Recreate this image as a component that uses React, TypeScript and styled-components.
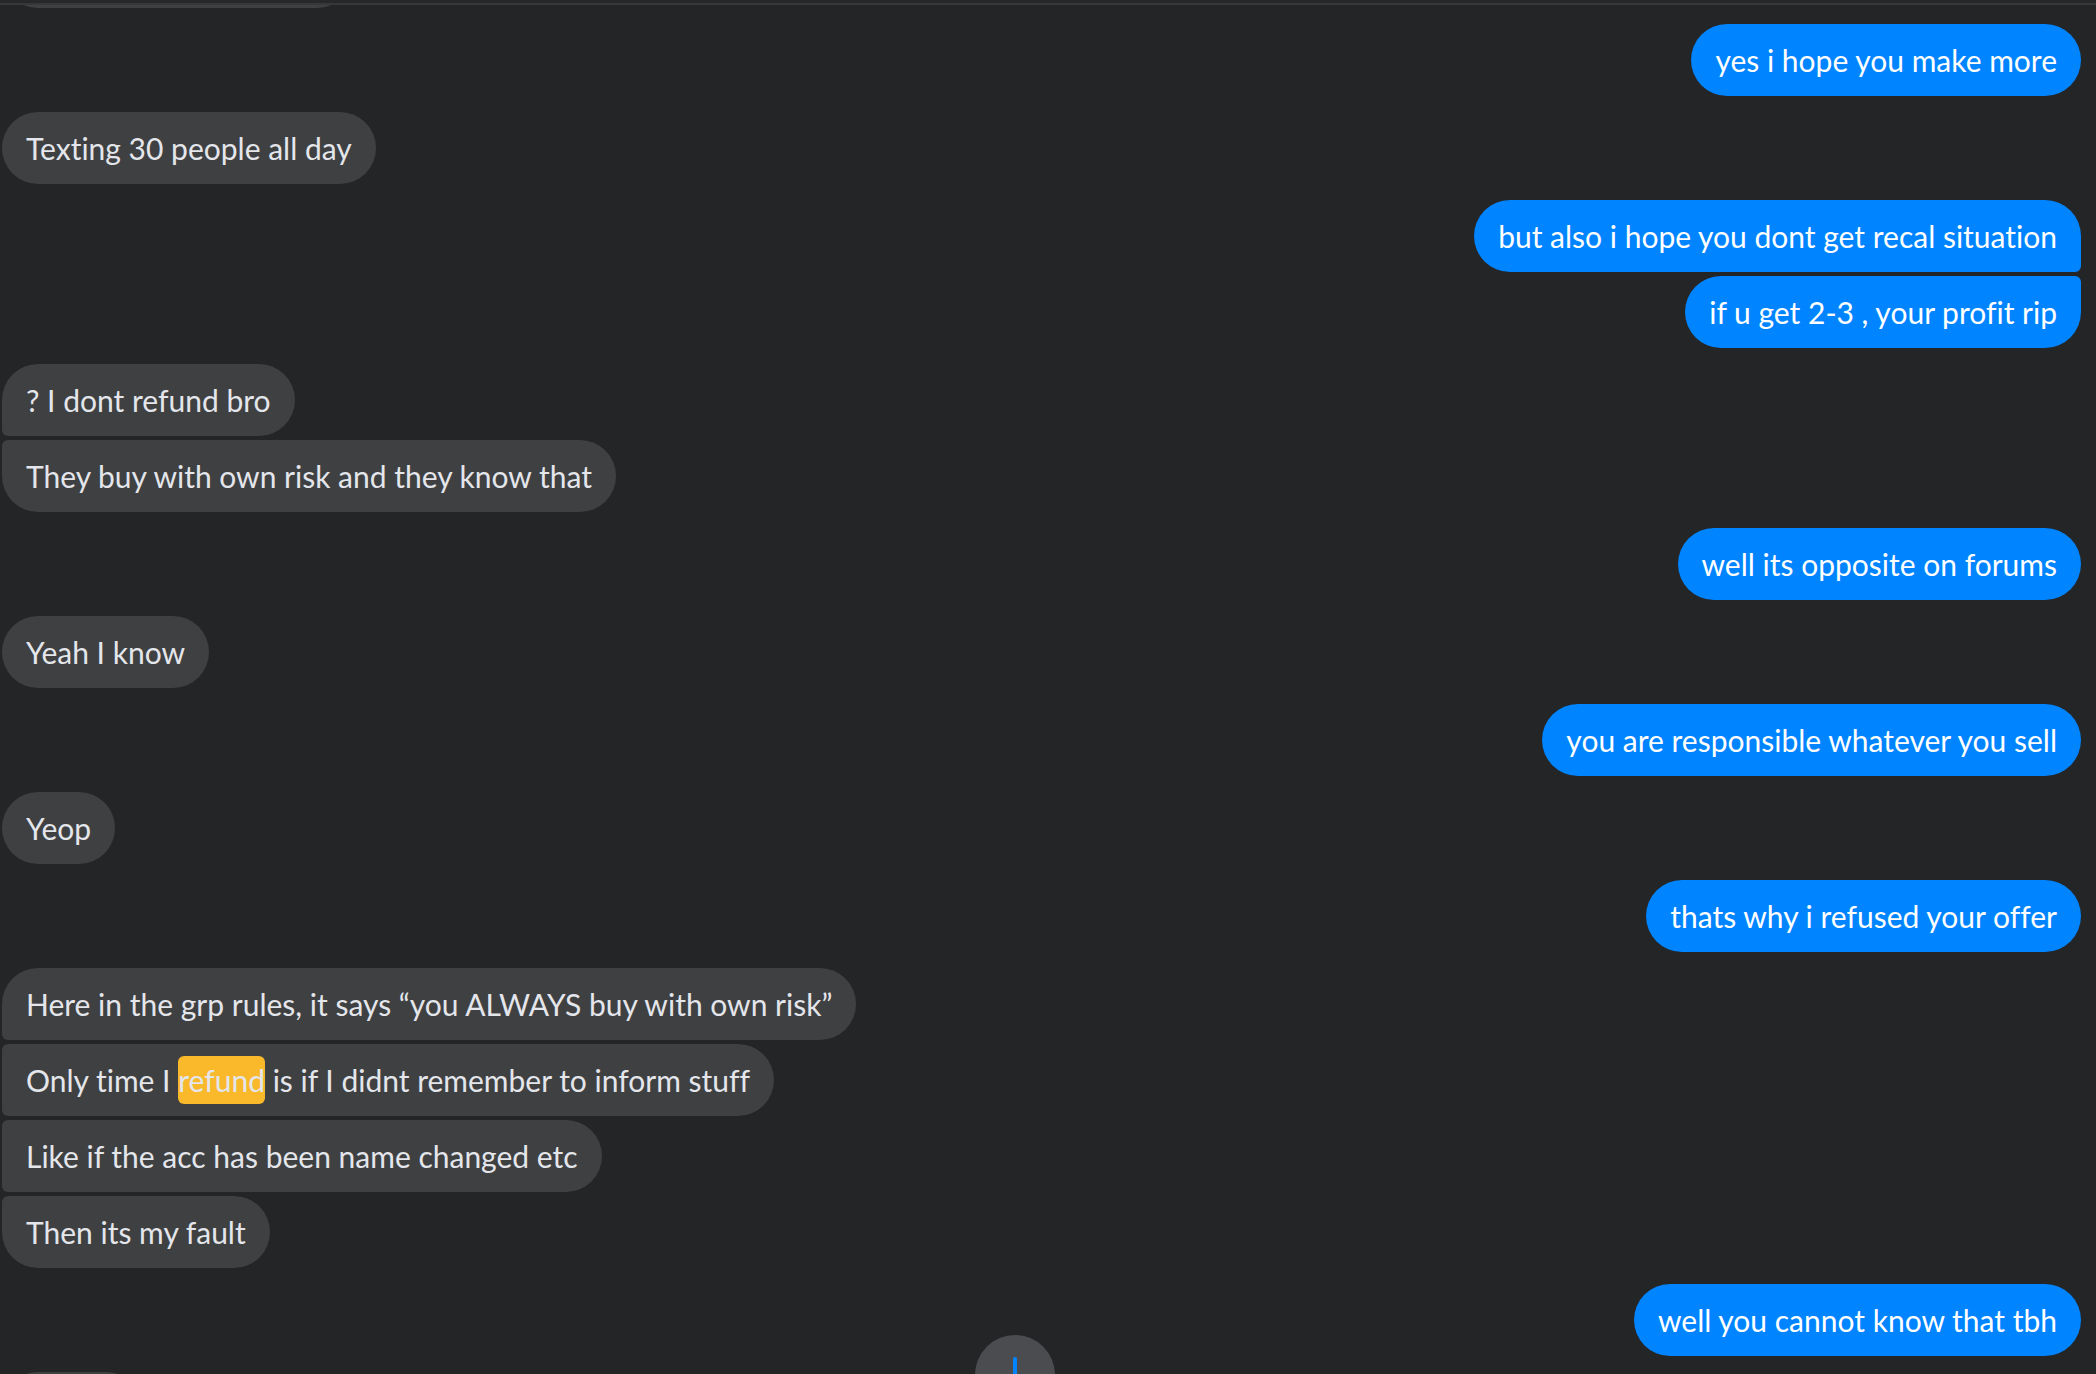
import React from "react";
import styled, { createGlobalStyle, css } from "styled-components";

type Side = "in" | "out";
type Pos = "single" | "first" | "middle" | "last";

type Group = {
  side: Side;
  lines: React.ReactNode[];
};

const GlobalStyle = createGlobalStyle`
  html, body {
    margin: 0;
    padding: 0;
    height: 100%;
    background: #242526;
  }
  #root {
    height: 100%;
  }
`;

const Page = styled.div`
  height: 100vh;
  display: flex;
  flex-direction: column;
  overflow: hidden;
  position: relative;
  background: #242526;
  font-family: Lato, "Noto Sans", "Liberation Sans", sans-serif;
  font-variant-ligatures: none;
`;

const TopEdge = styled.div`
  flex-shrink: 0;
  height: 3px;
  background: #27282a;
  border-bottom: 2px solid #37383a;
`;

const Thread = styled.div`
  flex: 1;
  overflow: hidden;
  position: relative;
`;

const List = styled.div`
  display: flex;
  flex-direction: column;
  gap: 16px;
  margin-top: -69px; /* scrolled: previous bubble peeks under the edge */
  padding: 0 15px 0 2px;
`;

const Row = styled.div<{ $side: Side }>`
  display: flex;
  flex-direction: column;
  gap: 4px;
  align-items: ${(p) => (p.$side === "out" ? "flex-end" : "flex-start")};
`;

const BIG = 36;
const SMALL = 6;

const radius = (side: Side, pos: Pos) => {
  const top = pos === "single" || pos === "first" ? BIG : SMALL;
  const bottom = pos === "single" || pos === "last" ? BIG : SMALL;
  // only the side facing the sender gets the small corners
  if (side === "out") return `${BIG}px ${top}px ${bottom}px ${BIG}px`;
  return `${top}px ${BIG}px ${BIG}px ${bottom}px`;
};

const Bubble = styled.div<{ $side: Side; $pos: Pos }>`
  box-sizing: border-box;
  height: 72px;
  padding: 16px 24px;
  font-size: 30px;
  line-height: 40px;
  white-space: nowrap;
  border-radius: ${(p) => radius(p.$side, p.$pos)};
  ${(p) =>
    p.$side === "out"
      ? css`
          background: #0084ff;
          color: #ffffff;
        `
      : css`
          background: #3e4042;
          color: #e4e6eb;
        `}
`;

const Hit = styled.span`
  background: #f9b92b;
  border-radius: 6px;
  padding: 6px 0;
`;

const ScrollDown = styled.button`
  position: absolute;
  left: 975px;
  bottom: -41px;
  width: 80px;
  height: 80px;
  border: none;
  border-radius: 50%;
  padding: 0;
  background: #4b4c4f;
  display: flex;
  align-items: center;
  justify-content: center;
  cursor: pointer;
`;

const groups: Group[] = [
  { side: "in", lines: ["Its a lot of work ngl bro"] },
  { side: "out", lines: ["yes i hope you make more"] },
  { side: "in", lines: ["Texting 30 people all day"] },
  {
    side: "out",
    lines: [
      "but also i hope you dont get recal situation",
      "if u get 2-3 , your profit rip",
    ],
  },
  {
    side: "in",
    lines: ["? I dont refund bro", "They buy with own risk and they know that"],
  },
  { side: "out", lines: ["well its opposite on forums"] },
  { side: "in", lines: ["Yeah I know"] },
  { side: "out", lines: ["you are responsible whatever you sell"] },
  { side: "in", lines: ["Yeop"] },
  { side: "out", lines: ["thats why i refused your offer"] },
  {
    side: "in",
    lines: [
      "Here in the grp rules, it says \u201cyou ALWAYS buy with own risk\u201d",
      <>
        Only time I <Hit>refund</Hit> is if I didnt remember to inform stuff
      </>,
      "Like if the acc has been name changed etc",
      "Then its my fault",
    ],
  },
  { side: "out", lines: ["well you cannot know that tbh"] },
  { side: "in", lines: ["Ya true"] },
];

const posOf = (i: number, n: number): Pos => {
  if (n === 1) return "single";
  if (i === 0) return "first";
  if (i === n - 1) return "last";
  return "middle";
};

export default function App() {
  return (
    <>
      <GlobalStyle />
      <Page>
        <TopEdge />
        <Thread>
          <List>
            {groups.map((g, gi) => (
              <Row key={gi} $side={g.side}>
                {g.lines.map((line, li) => (
                  <Bubble key={li} $side={g.side} $pos={posOf(li, g.lines.length)}>
                    {line}
                  </Bubble>
                ))}
              </Row>
            ))}
          </List>
          <ScrollDown aria-label="Scroll to bottom">
            <svg width="80" height="80" viewBox="0 0 80 80" fill="none">
              <path
                d="M40 24v32M28 44l12 12 12-12"
                stroke="#0084ff"
                strokeWidth="4"
                strokeLinecap="round"
                strokeLinejoin="round"
              />
            </svg>
          </ScrollDown>
        </Thread>
      </Page>
    </>
  );
}
